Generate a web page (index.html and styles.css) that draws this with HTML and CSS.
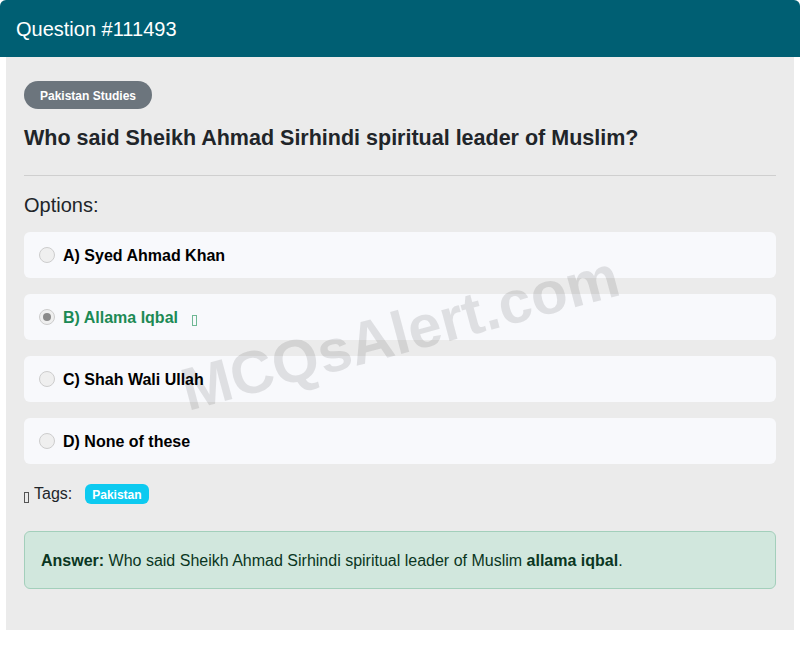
FILE: index.html
```html
<!DOCTYPE html>
<html>
<head>
<meta charset="utf-8">
<link rel="stylesheet" href="styles.css">
</head>
<body>
<div class="card">
  <div class="card-header">Question #111493</div>
  <div class="card-body">
    <span class="cat-badge">Pakistan Studies</span>
    <h1 class="question">Who said Sheikh Ahmad Sirhindi spiritual leader of Muslim?</h1>
    <hr class="divider">
    <h2 class="options-title">Options:</h2>
    <div class="options">
      <div class="option"><span class="radio"></span><span class="opt-text">A) Syed Ahmad Khan</span></div>
      <div class="option correct"><span class="radio checked"></span><span class="opt-text">B) Allama Iqbal</span><span class="tofu green"></span></div>
      <div class="option"><span class="radio"></span><span class="opt-text">C) Shah Wali Ullah</span></div>
      <div class="option"><span class="radio"></span><span class="opt-text">D) None of these</span></div>
    </div>
    <div class="tags"><span class="tofu dark"></span><span class="tags-label">Tags:</span><span class="tag">Pakistan</span></div>
    <div class="answer"><strong>Answer:</strong> Who said Sheikh Ahmad Sirhindi spiritual leader of Muslim <strong>allama iqbal</strong>.</div>
    <div class="watermark">MCQsAlert.com</div>
  </div>
</div>
</body>
</html>
```
FILE: styles.css
```css
* { box-sizing: border-box; }
html, body { margin: 0; padding: 0; background: #fff; }
body { font-family: "Liberation Sans", Arial, sans-serif; color: #212529; }
.card { width: 800px; }
.card-header {
  background: #005f73;
  color: #fff;
  height: 57px;
  padding: 1px 16px 0;
  display: flex;
  align-items: center;
  font-size: 20px;
  border-radius: 6px 6px 0 0;
}
.card-body {
  position: relative;
  margin: 0 6px;
  background: #ebebeb;
  padding: 24px 18px 41px;
  overflow: hidden;
}
.watermark {
  position: absolute;
  left: 394px;
  top: 276px;
  transform: translate(-50%, -50%) rotate(-15deg);
  font-size: 60px;
  font-weight: bold;
  color: rgba(0,0,0,0.1);
  white-space: nowrap;
  pointer-events: none;
}
.cat-badge {
  display: inline-flex;
  align-items: center;
  height: 28px;
  padding: 1px 16px 0;
  border-radius: 14px;
  background: #6c757d;
  color: #fff;
  font-size: 12px;
  font-weight: bold;
}
.question {
  margin: 16px 0 24px;
  font-size: 21.5px;
  line-height: 26px;
  font-weight: bold;
  color: #212529;
}
.divider { margin: 0 0 17px; border: 0; border-top: 1px solid #cfcfcf; }
.options-title { margin: 0 0 15px; font-size: 20px; font-weight: normal; line-height: 24px; }
.options { display: flex; flex-direction: column; gap: 16px; }
.option {
  height: 46px;
  background: #f8f9fc;
  border-radius: 6px;
  display: flex;
  align-items: center;
  padding: 1px 15px 0;
  font-size: 16px;
  font-weight: bold;
  color: #000;
}
.radio {
  width: 16px; height: 16px;
  border-radius: 50%;
  border: 1px solid #cdcdcd;
  background: #efefef;
  margin-right: 8px;
  margin-top: -1px;
  display: flex; align-items: center; justify-content: center;
}
.radio.checked::after {
  content: "";
  width: 8px; height: 8px;
  border-radius: 50%;
  background: #8a8a8a;
}
.option.correct { color: #1c8a55; }
.tofu {
  display: inline-block;
  width: 5px; height: 11px;
  border: 1px solid currentColor;
}
.tofu.green { margin-left: 14px; margin-top: 5px; color: #6fb894; }
.tofu.dark { color: #555; margin-top: 6px; margin-right: 5px; }
.tags { margin: 18px 0 25px; display: flex; align-items: center; font-size: 16px; line-height: 24px; }
.tags-label { margin-right: 13px; }
.tag {
  background: #0dcaf0;
  color: #fff;
  font-size: 12px;
  font-weight: bold;
  height: 20px;
  padding: 1px 7px 0;
  border-radius: 6px;
  display: inline-flex; align-items: center;
}
.answer {
  background: #d1e7dd;
  border: 1px solid #a3cfbb;
  border-radius: 6px;
  color: #0a3622;
  padding: 2px 16px 0;
  height: 58px;
  display: flex;
  align-items: center;
  font-size: 16px;
  white-space: pre;
}
```
